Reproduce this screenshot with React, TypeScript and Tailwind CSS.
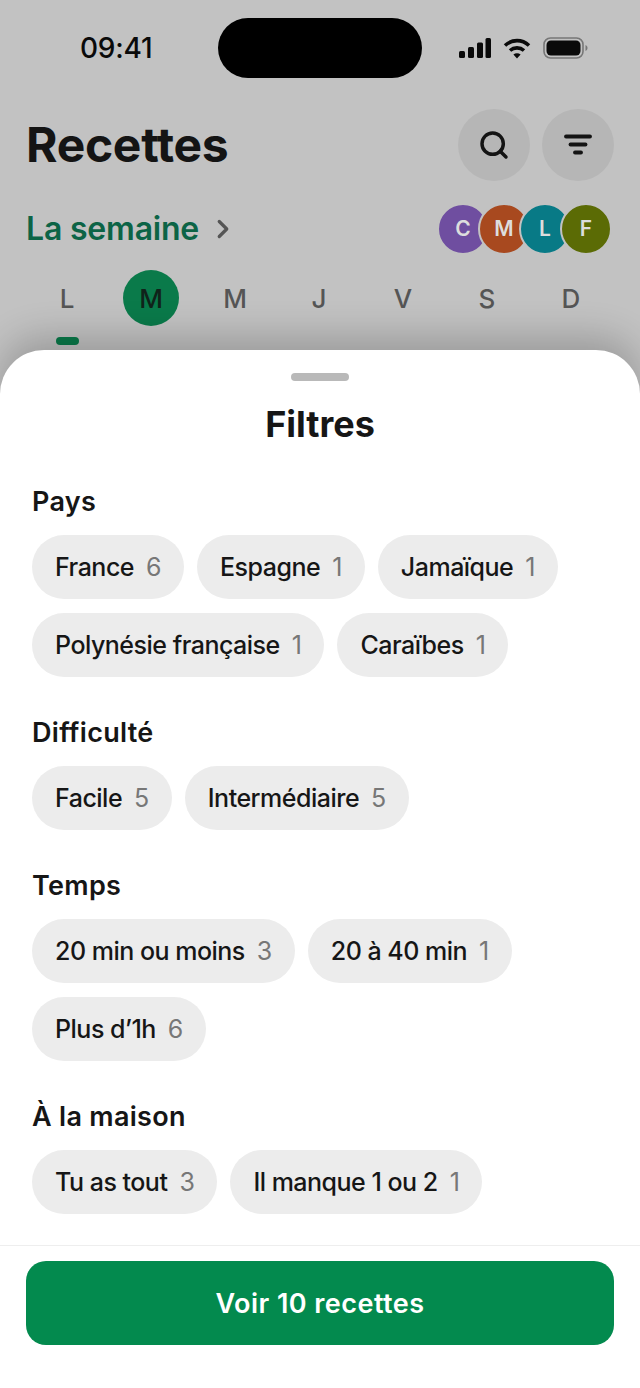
import React from "react";
import { ChevronRight, Search } from "lucide-react";

const days = ["L", "M", "M", "J", "V", "S", "D"];

const avatars = [
  { letter: "C", className: "bg-[#6f4ea0]" },
  { letter: "M", className: "bg-[#a8491f]" },
  { letter: "L", className: "bg-[#087a86]" },
  { letter: "F", className: "bg-[#5b6b05]" },
];

const sections = [
  {
    title: "Pays",
    chips: [
      ["France", 6],
      ["Espagne", 1],
      ["Jamaïque", 1],
      ["Polynésie française", 1],
      ["Caraïbes", 1],
    ],
  },
  {
    title: "Difficulté",
    chips: [
      ["Facile", 5],
      ["Intermédiaire", 5],
    ],
  },
  {
    title: "Temps",
    chips: [
      ["20 min ou moins", 3],
      ["20 à 40 min", 1],
      ["Plus d’1h", 6],
    ],
  },
  {
    title: "À la maison",
    chips: [
      ["Tu as tout", 3],
      ["Il manque 1 ou 2", 1],
    ],
  },
];

const StatusIcons = () => (
  <div className="flex items-center gap-3">
    <svg width="32" height="20" viewBox="0 0 32 20" fill="#0a0a0a">
      <rect x="0" y="13" width="6" height="7" rx="1.5" />
      <rect x="9" y="9" width="6" height="11" rx="1.5" />
      <rect x="18" y="4.5" width="6" height="15.5" rx="1.5" />
      <rect x="26.5" y="0" width="5.5" height="20" rx="1.5" />
    </svg>
    <svg width="28" height="21" viewBox="0 0 28 21" fill="none" stroke="#0a0a0a" strokeWidth="3.6">
      <path d="M2 7.5C9 1 19 1 26 7.5" />
      <path d="M7 12.5C11 9 17 9 21 12.5" />
      <path d="M14 20.5L10.4 16.6C12.4 14.9 15.6 14.9 17.6 16.6Z" fill="#0a0a0a" stroke="none" />
    </svg>
    <svg width="45" height="22" viewBox="0 0 45 22" fill="none">
      <rect x="1" y="1" width="39" height="20" rx="6.5" stroke="#777" strokeWidth="1.6" />
      <rect x="3.5" y="3.5" width="34" height="15" rx="4.5" fill="#0a0a0a" />
      <path d="M42.5 8v6c1.2-.5 2-1.700 2-3s-.8-2.500-2-3z" fill="#777" />
    </svg>
  </div>
);

const FilterIcon = () => (
  <svg width="30" height="24" viewBox="0 0 30 24" fill="none" stroke="#141414" strokeWidth="3.8" strokeLinecap="round">
    <path d="M3 3.500H27" />
    <path d="M7.500 11.500H22.500" />
    <path d="M12 19.500H18" />
  </svg>
);

const Chip = ({ label, count }: { label: string; count: number }) => (
  <div className="flex h-16 items-center gap-3 rounded-full bg-[#ececec] px-[23px] pt-[2px] text-[25px] font-medium tracking-[-0.5px] text-[#161616]">
    <span>{label}</span>
    <span className="font-normal text-[#777777]">{count}</span>
  </div>
);

export default function App() {
  return (
    <div className="flex h-[1388px] w-[640px] flex-col overflow-hidden bg-[#c2c2c2] font-['Inter',sans-serif]">
      <div className="h-[350px] shrink-0">
        <div className="flex items-center pt-[18px]">
          <div className="w-[218px] pl-[80px] text-[28px] font-medium leading-[60px] tracking-[-0.2px] text-[#0a0a0a]">09:41</div>
          <div className="h-[60px] w-[204px] rounded-full bg-black" />
          <div className="pl-[37px]">
            <StatusIcons />
          </div>
        </div>

        <div className="mt-[31px] flex items-center justify-between pl-[26px] pr-[26px]">
          <h1 className="text-[48px] font-bold leading-[72px] tracking-[-0.3px] text-[#141414]">Recettes</h1>
          <div className="flex gap-3">
            <div className="flex h-[72px] w-[72px] items-center justify-center rounded-full bg-[#b6b6b6]">
              <Search size={32} strokeWidth={2.6} color="#141414" />
            </div>
            <div className="flex h-[72px] w-[72px] items-center justify-center rounded-full bg-[#b6b6b6]">
              <FilterIcon />
            </div>
          </div>
        </div>

        <div className="mt-[22px] flex items-center justify-between pl-[26px] pr-[28px]">
          <div className="flex items-center gap-[9px]">
            <span className="text-[32px] font-semibold leading-[48px] tracking-[-0.2px] text-[#0c6446]">La semaine</span>
            <ChevronRight size={30} strokeWidth={2.6} color="#555555" />
          </div>
          <div className="flex">
            {avatars.map((a, i) => (
              <div
                key={a.letter}
                className={`flex h-[52px] w-[52px] items-center justify-center rounded-full border-2 border-[#c2c2c2] text-[21px] font-semibold text-[#dddddd] ${a.className} ${i > 0 ? "-ml-[11px]" : ""}`}
              >
                {a.letter}
              </div>
            ))}
          </div>
        </div>

        <div className="mt-[15px] flex pl-[25px]">
          {days.map((d, i) => (
            <div key={i} className="flex w-[84px] flex-col items-center">
              <div
                className={`flex h-14 w-14 items-center justify-center rounded-full text-[26px] font-medium ${i === 1 ? "bg-[#0a7a4a] text-[#10231a]" : "text-[#555555]"}`}
              >
                {d}
              </div>
              {i === 0 && <div className="mt-[11px] h-2 w-[23px] rounded-full bg-[#0a7a4a]" />}
            </div>
          ))}
        </div>
      </div>

      <div className="flex flex-1 flex-col rounded-t-[44px] bg-white shadow-[0_-14px_36px_rgba(0,0,0,0.2)]">
        <div className="mx-auto mt-[23px] h-2 w-[58px] rounded-full bg-[#b9b9b9]" />
        <h2 className="mt-[19px] text-center text-[36px] font-bold leading-[48px] text-[#161616]">Filtres</h2>

        <div className="mt-[35px] flex flex-col gap-[37px] px-[32px]">
          {sections.map((s) => (
            <div key={s.title}>
              <h3 className="mb-[16px] pt-[2px] text-[27px] font-semibold leading-[34px] tracking-[0.3px] text-[#161616]">{s.title}</h3>
              <div className="flex flex-wrap gap-x-[13px] gap-y-[14px]">
                {s.chips.map(([label, count]) => (
                  <Chip key={label as string} label={label as string} count={count as number} />
                ))}
              </div>
            </div>
          ))}
        </div>

        <div className="mt-[31px] border-t border-[#eeeeee] px-[26px] pt-[15px]">
          <button className="h-[84px] w-full rounded-[20px] bg-[#038a4e] pt-[2px] text-[27px] font-semibold tracking-[0.45px] text-white">
            Voir 10 recettes
          </button>
        </div>
      </div>
    </div>
  );
}
